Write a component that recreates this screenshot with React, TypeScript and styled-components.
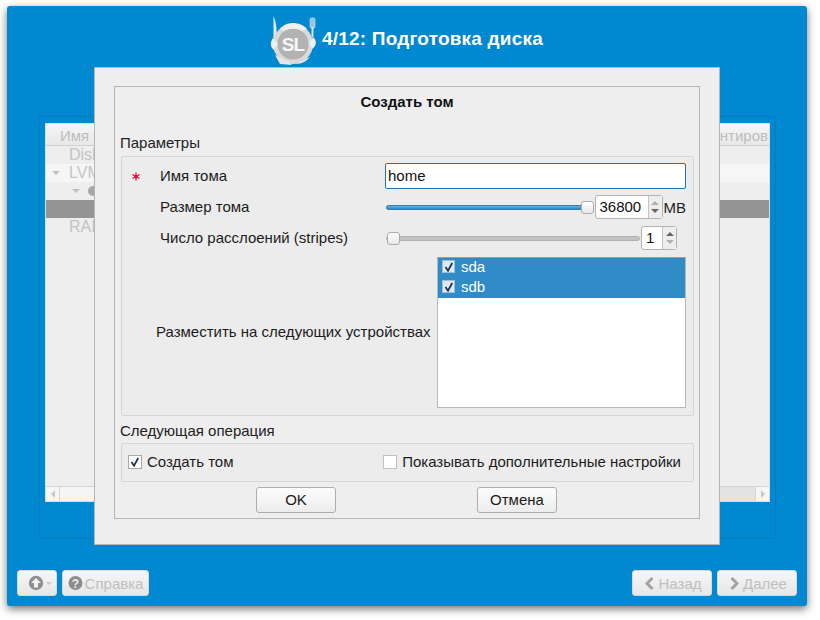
import React from "react";
import styled, { createGlobalStyle } from "styled-components";

const Global = createGlobalStyle`
  html, body { margin: 0; padding: 0; background: #fff; width: 820px; height: 620px; overflow: hidden; }
  body { font-family: "Liberation Sans", Arial, sans-serif; font-size: 15px; color: #1a1a1a; }
`;

const Window = styled.div`
  position: relative;
  box-sizing: border-box;
  margin: 6px 0 0 7px;
  width: 800px;
  height: 600px;
  background: #0088d0;
  border-radius: 3px;
  box-shadow: 0 3px 8px rgba(0,0,0,.55);
  display: flex;
  flex-direction: column;
`;
const Header = styled.div`
  box-sizing: border-box;
  height: 61px;
  flex: none;
  display: flex;
  align-items: flex-start;
  padding: 8px 0 0 263px;
  gap: 2px;
`;
const Title = styled.div`
  font-weight: 700;
  font-size: 19px;
  color: #fff;
  line-height: 50px;
  letter-spacing: 0.2px;
`;
const Content = styled.div`
  box-sizing: border-box;
  margin: 49px 31px 0 32px;
  height: 423px;
  flex: none;
  border: 1px solid #0a7cba;
  padding: 6px 0 0 5px;
`;
const Table = styled.div`
  box-sizing: border-box;
  width: 725px;
  height: 379px;
  background: #eee;
  border: 1px solid #dcdcdc;
  display: flex;
  flex-direction: column;
`;
const TableHead = styled.div`
  height: 21px;
  flex: none;
  display: flex;
  justify-content: space-between;
  background: linear-gradient(#f6f6f6, #e8e8e8);
  border-bottom: 1px solid #cfcfcf;
  color: #bdbdbd;
  line-height: 23px;
  font-size: 15px;
`;
const HeadName = styled.span`padding-left: 14px;`;
const HeadMount = styled.span`
  padding-right: 1px;
  white-space: nowrap;
`;
const Rows = styled.div`flex: 1;`;
const TRow = styled.div<{ $bg?: string; $indent: number }>`
  height: 18px;
  background: ${p => p.$bg || "transparent"};
  padding-left: ${p => p.$indent}px;
  color: #c4c4c4;
  font-size: 16px;
  line-height: 18px;
  display: flex;
  align-items: center;
  gap: 9px;
`;
const Caret = styled.span`
  width: 0; height: 0;
  border: 4px solid transparent;
  border-top: 4px solid #c2c2c2;
  border-bottom: 0;
`;
const DiskDot = styled.span`
  width: 10px;
  height: 10px;
  margin-left: -1px;
  border-radius: 50%;
  background: #a6a6a6;
`;
const ScrollBar = styled.div`
  flex: none;
  height: 14px;
  background: #e3e3e3;
  border-top: 1px solid #d5d5d5;
  display: flex;
`;
const ScrollBtn = styled.div<{ $right?: boolean }>`
  width: 13px;
  background: #f6f6f6;
  display: flex;
  align-items: center;
  justify-content: center;
  ${p => p.$right ? "border-left: 1px solid #d5d5d5;" : "border-right: 1px solid #d5d5d5;"}
  &::before {
    content: "";
    border: 4px solid transparent;
    ${p => p.$right ? "border-left: 4px solid #c8c8c8; border-right: 0;" : "border-right: 4px solid #c8c8c8; border-left: 0;"}
  }
`;
const ScrollThumb = styled.div`
  width: 640px;
  background: #f5f5f5;
`;
const ScrollTrack = styled.div`flex: 1;`;
const Footer = styled.div`
  margin-top: auto;
  padding: 0 10px 10px 10px;
  display: flex;
  align-items: center;
  gap: 5px;
`;
const NavButton = styled.div<{ $w: number; $left?: number; $start?: boolean; $gap?: number }>`
  box-sizing: border-box;
  width: ${p => p.$w}px;
  height: 26px;
  background: linear-gradient(#f7f7f7, #e6e6e6);
  border: 1px solid #d8d8d8;
  border-radius: 3px;
  color: #bfbfbf;
  font-size: 15px;
  display: flex;
  align-items: center;
  justify-content: ${p => p.$start ? "flex-start" : "center"};
  padding-left: ${p => p.$left || 0}px;
  gap: ${p => p.$gap ?? 4}px;
`;
const TinyCaret = styled.span`
  width: 0; height: 0;
  border: 3px solid transparent;
  border-top: 3px solid #c8c8c8;
  border-bottom: 0;
`;
const Spacer = styled.div`flex: 1;`;

const Dialog = styled.div`
  position: absolute;
  left: 87px;
  top: 61px;
  box-sizing: border-box;
  width: 626px;
  height: 478px;
  background: #eeeeee;
  border: 1px solid #b5b5b5;
  padding: 18px 19px 25px 19px;
`;
const Frame = styled.div`
  box-sizing: border-box;
  height: 433px;
  border: 1px solid #b5b5b5;
  padding: 0 5px 0 5px;
  display: flex;
  flex-direction: column;
`;
const DialogTitle = styled.div`
  font-weight: 700;
  font-size: 15px;
  text-align: center;
  line-height: 17px;
  padding: 6px 0 1px;
  color: #111;
`;
const SectionLabel = styled.div<{ $top: number }>`
  margin-top: ${p => p.$top}px;
  font-size: 15px;
  line-height: 15px;
  padding-bottom: 2px;
  color: #222;
`;
const Group = styled.div`
  box-sizing: border-box;
  margin-left: 1px;
  background: #ececec;
  border: 1px solid #d6d6d6;
  border-radius: 2px;
`;
const ParamGroup = styled(Group)`
  margin-top: 4px;
  height: 260px;
  padding: 6px 7px 7px 10px;
  display: grid;
  grid-template-columns: 28px 225px 52px 1fr;
  grid-template-rows: 26px 36px 26px 1fr;
  align-items: center;
`;
const FieldLabel = styled.label<{ $wide?: boolean }>`
  font-size: 15px;
  color: #1c1c1c;
  white-space: nowrap;
  ${p => p.$wide ? "grid-column: 1 / span 3; padding: 4px 0 0 24px;" : "grid-column: 2; padding-bottom: 2px;"}
`;
const TextInput = styled.div`
  grid-column: 3 / span 2;
  box-sizing: border-box;
  height: 26px;
  background: #fff;
  border: 1px solid #2a6fa5;
  border-radius: 2px;
  font-size: 15px;
  line-height: 24px;
  padding-left: 2px;
  color: #111;
`;
const SliderRow = styled.div`
  grid-column: 3 / span 2;
  display: flex;
  align-items: center;
  gap: 1px;
`;
const Slider = styled.div<{ $w: number }>`
  position: relative;
  margin-left: 1px;
  width: ${p => p.$w}px;
  height: 5px;
  background: #c4c4c4;
  border: 1px solid #b0b0b0;
  box-sizing: border-box;
  border-radius: 3px;
`;
const SliderFill = styled.div`
  position: absolute;
  left: -1px; top: -1px; bottom: -1px; right: 0;
  background: linear-gradient(#6db2e0, #2a86c8);
  border-radius: 3px;
  border: 1px solid #2f7fb8;
`;
const Knob = styled.div<{ $left: boolean }>`
  position: absolute;
  top: -5px;
  ${p => p.$left ? "left: 0;" : "right: -1px;"}
  box-sizing: border-box;
  width: 13px;
  height: 13px;
  background: linear-gradient(#fff, #e8e8e8);
  border: 1px solid #ababab;
  border-radius: 3px;
`;
const Spin = styled.div<{ $w: number }>`
  box-sizing: border-box;
  width: ${p => p.$w}px;
  height: 24px;
  background: #fff;
  border: 1px solid #b3b3b3;
  border-radius: 3px;
  display: flex;
  font-size: 15px;
  line-height: 22px;
  color: #111;
  flex: none;
`;
const SpinValue = styled.span<{ $pad: number }>`
  flex: 1;
  padding-left: ${p => p.$pad}px;
`;
const SpinArrows = styled.span`
  width: 13px;
  background: #eee;
  border-left: 1px solid #c4c4c4;
  display: flex;
  flex-direction: column;
  align-items: center;
  justify-content: center;
  gap: 4px;
`;
const Arrow = styled.i<{ $up?: boolean; $dark?: boolean }>`
  width: 0; height: 0;
  border: 4px solid transparent;
  ${p => p.$up
    ? `border-top: 0; border-bottom: 4px solid ${p.$dark ? "#666" : "#b0b0b0"};`
    : `border-bottom: 0; border-top: 4px solid ${p.$dark ? "#666" : "#b0b0b0"};`}
`;
const Unit = styled.span`
  font-size: 15px;
  color: #222;
`;
const DeviceList = styled.div`
  grid-column: 4;
  justify-self: end;
  align-self: end;
  box-sizing: border-box;
  width: 249px;
  height: 151px;
  background: #fff;
  border: 1px solid #b8b8b8;
  border-top: 1px solid #9c9c9c;
`;
const DeviceRow = styled.div`
  box-sizing: border-box;
  height: 20px;
  background: #308cc6;
  color: #fff;
  font-size: 15px;
  display: flex;
  align-items: center;
  padding: 0 0 3px 4px;
  gap: 6px;
`;
const CheckBox = styled.span<{ $tint?: boolean; $grey?: boolean }>`
  box-sizing: border-box;
  width: ${p => p.$tint ? 13 : 14}px;
  height: ${p => p.$tint ? 13 : 14}px;
  background: ${p => p.$tint ? "#dce9f3" : "#fff"};
  border: 1px solid ${p => p.$grey ? "#c0c0c0" : p.$tint ? "#9cc0dc" : "#a8a8a8"};
  display: inline-flex;
  align-items: center;
  justify-content: center;
  flex: none;
`;
const OpGroup = styled(Group)`
  margin-top: 3px;
  height: 39px;
  display: flex;
  align-items: center;
  padding: 0 12px 2px 6px;
  justify-content: space-between;
`;
const CheckLabel = styled.span`
  display: inline-flex;
  align-items: center;
  gap: 5px;
  font-size: 15px;
  color: #1c1c1c;
`;
const Buttons = styled.div`
  margin-top: 5px;
  display: flex;
  padding-left: 136px;
  gap: 141px;
`;
const DialogButton = styled.div`
  box-sizing: border-box;
  width: 80px;
  height: 26px;
  background: linear-gradient(#fdfdfd, #ececec);
  border: 1px solid #adadad;
  border-radius: 3px;
  font-size: 15px;
  line-height: 23px;
  text-align: center;
  color: #1a1a1a;
`;

const Tick = () => (
  <svg width="10" height="10" viewBox="0 0 10 10"><path d="M1.5 5 L4 8.7 L8.2 1" fill="none" stroke="#1d2f40" strokeWidth="1.7" /></svg>
);

const StarIcon = () => (
  <svg width="8" height="9" viewBox="0 0 8 9">
    <path d="M4 0.5 V8.5 M0.5 2.5 L7.5 6.5 M7.5 2.5 L0.5 6.5" stroke="#f5003c" strokeWidth="1.2" fill="none" />
    <circle cx="4" cy="4.5" r="1.8" fill="#f5003c" />
  </svg>
);

const Logo = () => (
  <svg width="50" height="52" viewBox="0 0 50 52">
    <path d="M3.5 2 C6 8 7 14 6.5 24 L3.5 24 Z" fill="#e8ecee" />
    <rect x="3.5" y="22" width="2.5" height="8" fill="#cfd6da" />
    <rect x="40" y="4" width="5" height="10" rx="1.5" fill="#8fc6e6" stroke="#d8e8f0" strokeWidth="0.6" />
    <rect x="41.5" y="13" width="2" height="10" fill="#dfe6ea" />
    <circle cx="23" cy="30" r="20" fill="#d9d9d9" />
    <circle cx="23" cy="30" r="15.5" fill="#b2b2b2" />
    <path d="M23 9 C28 9 34 11 37 15 L32 17 C28 14 18 14 14 17 L10 15 C13 11 18 9 23 9 Z" fill="#efefef" />
    <path d="M3 24 C0 28 0 33 4 36 L8 30 Z M43 23 C47 26 47 32 42 35 L39 29 Z" fill="#eeeeee" />
    <path d="M5 41 L19 48 L22 51 L10 50 Z M26 50 C32 50 37 47 40 43 L34 46 Z" fill="#e6e6e6" />
    <text x="23" y="37" textAnchor="middle" fontFamily="Liberation Sans" fontWeight="700" fontSize="19" letterSpacing="-1" fill="#f6f6f6">SL</text>
  </svg>
);

const UpIcon = () => (
  <svg width="16" height="16" viewBox="0 0 16 16">
    <circle cx="8" cy="8" r="7.2" fill="#8f8f8f" />
    <path d="M8 3 L13 8 L10 8 L10 12.5 L6 12.5 L6 8 L3 8 Z" fill="#f2f2f2" />
  </svg>
);
const HelpIcon = () => (
  <svg width="15" height="16" viewBox="0 0 15 16">
    <circle cx="7.5" cy="8" r="7" fill="#8d8d8d" />
    <text x="7.5" y="12.5" textAnchor="middle" fontFamily="Liberation Sans" fontWeight="700" fontSize="12" fill="#ececec">?</text>
  </svg>
);
const Chevron = ({ left }: { left?: boolean }) => (
  <svg width="10" height="13" viewBox="0 0 10 13">
    <path d={left ? "M7.5 1 L2 6.5 L7.5 12" : "M2.5 1 L8 6.5 L2.5 12"} fill="none" stroke="#a2a2a2" strokeWidth="3" />
  </svg>
);

export default function App() {
  return (
    <>
      <Global />
      <Window>
        <Header>
          <Logo />
          <Title>4/12: Подготовка диска</Title>
        </Header>
        <Content>
          <Table>
            <TableHead>
              <HeadName>Имя</HeadName>
              <HeadMount>Примонтиров</HeadMount>
            </TableHead>
            <Rows>
              <TRow $indent={23}>Disk</TRow>
              <TRow $indent={6} $bg="#f6f6f6"><Caret />LVM</TRow>
              <TRow $indent={26}><Caret /><DiskDot /></TRow>
              <TRow $indent={0} $bg="#949494" />
              <TRow $indent={23}>RAID</TRow>
            </Rows>
            <ScrollBar>
              <ScrollBtn />
              <ScrollThumb />
              <ScrollTrack />
              <ScrollBtn $right />
            </ScrollBar>
          </Table>
        </Content>
        <Footer>
          <NavButton $w={40} $start $left={10} $gap={2}><UpIcon /><TinyCaret /></NavButton>
          <NavButton $w={87} $gap={2}><HelpIcon />Справка</NavButton>
          <Spacer />
          <NavButton $w={80} $left={2}><Chevron left />Назад</NavButton>
          <NavButton $w={80} $left={2}><Chevron />Далее</NavButton>
        </Footer>
        <Dialog>
          <Frame>
            <DialogTitle>Создать том</DialogTitle>
            <SectionLabel $top={24}>Параметры</SectionLabel>
            <ParamGroup>
              <StarIcon />
              <FieldLabel>Имя тома</FieldLabel>
              <TextInput>home</TextInput>

              <FieldLabel>Размер тома</FieldLabel>
              <SliderRow>
                <Slider $w={209}><SliderFill /><Knob $left={false} /></Slider>
                <Spin $w={68}>
                  <SpinValue $pad={4}>36800</SpinValue>
                  <SpinArrows><Arrow $up /><Arrow $dark /></SpinArrows>
                </Spin>
                <Unit>MB</Unit>
              </SliderRow>

              <FieldLabel>Число расслоений (stripes)</FieldLabel>
              <SliderRow>
                <Slider $w={254}><Knob $left /></Slider>
                <Spin $w={36}>
                  <SpinValue $pad={4}>1</SpinValue>
                  <SpinArrows><Arrow $up $dark /><Arrow /></SpinArrows>
                </Spin>
              </SliderRow>

              <FieldLabel $wide>Разместить на следующих устройствах</FieldLabel>
              <DeviceList>
                <DeviceRow><CheckBox $tint><Tick /></CheckBox>sda</DeviceRow>
                <DeviceRow><CheckBox $tint><Tick /></CheckBox>sdb</DeviceRow>
              </DeviceList>
            </ParamGroup>
            <SectionLabel $top={7}>Следующая операция</SectionLabel>
            <OpGroup>
              <CheckLabel><CheckBox><Tick /></CheckBox>Создать том</CheckLabel>
              <CheckLabel><CheckBox $grey />Показывать дополнительные настройки</CheckLabel>
            </OpGroup>
            <Buttons>
              <DialogButton>OK</DialogButton>
              <DialogButton>Отмена</DialogButton>
            </Buttons>
          </Frame>
        </Dialog>
      </Window>
    </>
  );
}
